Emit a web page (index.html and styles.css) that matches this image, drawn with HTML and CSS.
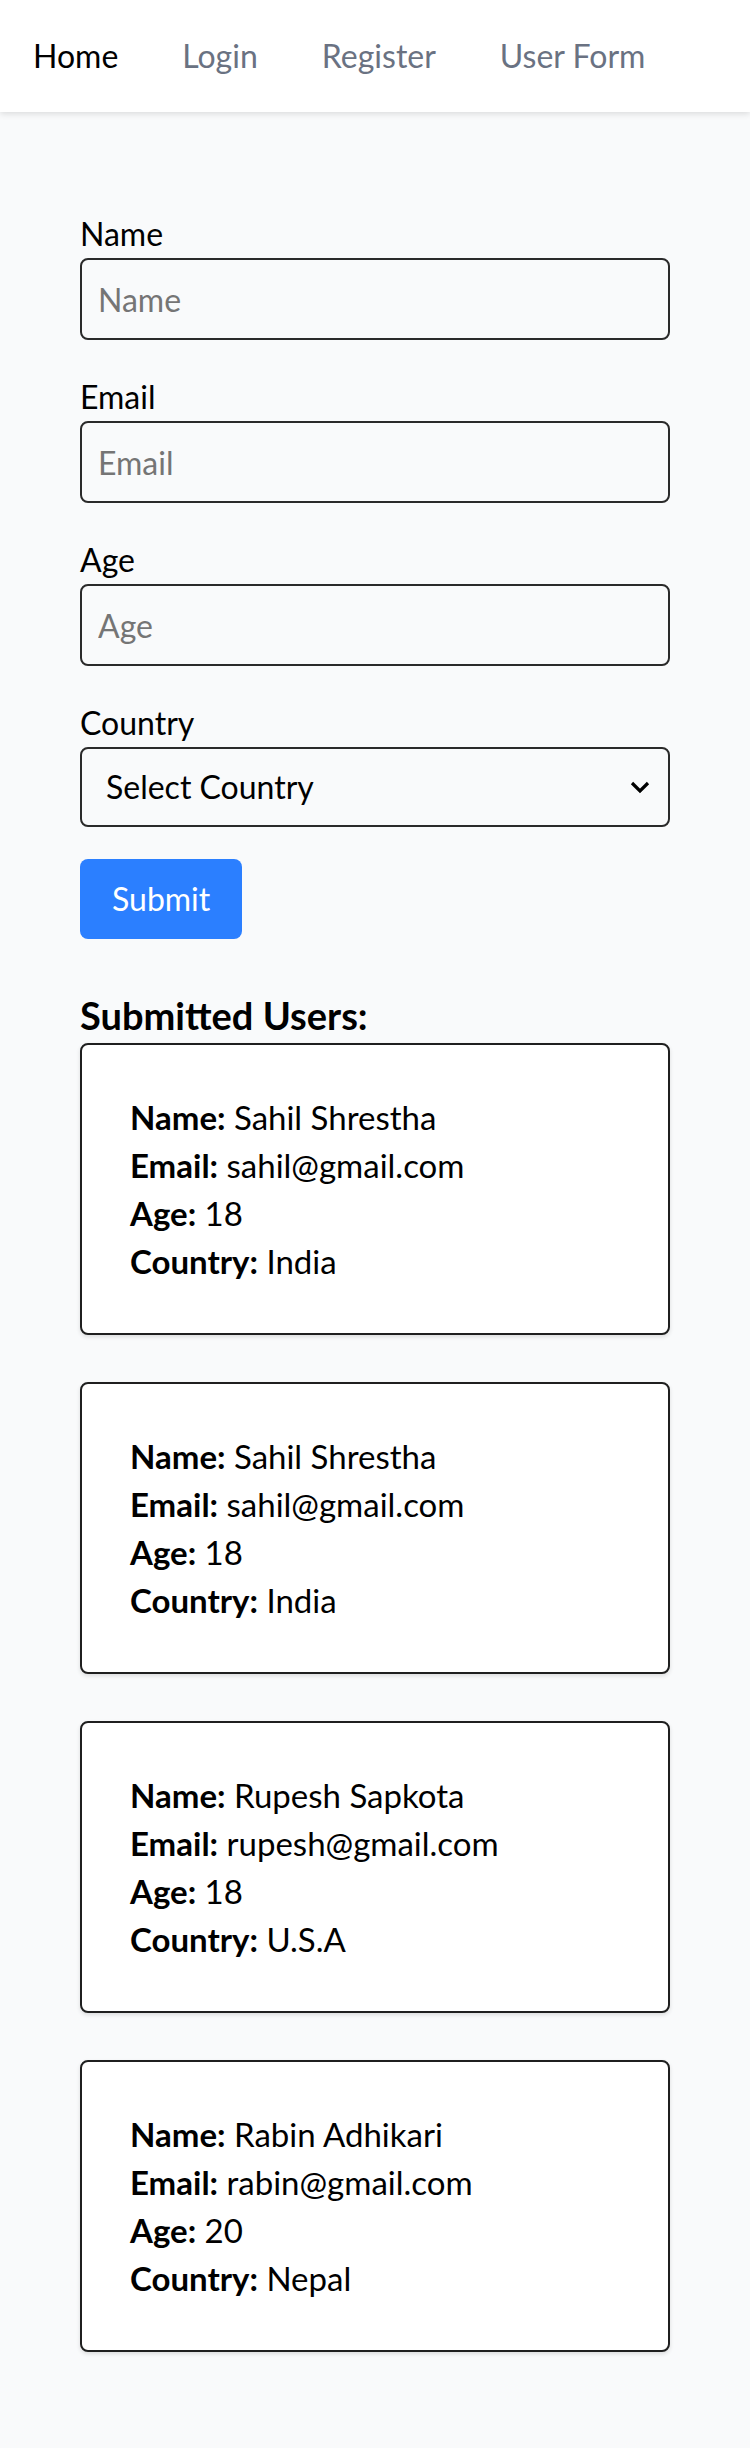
FILE: index.html
```html
<!DOCTYPE html>
<html lang="en">
<head>
<meta charset="utf-8">
<title>User Form</title>
<link rel="stylesheet" href="styles.css">
</head>
<body>
<nav class="nav">
  <a class="nav-link active" href="#">Home</a>
  <a class="nav-link" href="#">Login</a>
  <a class="nav-link" href="#">Register</a>
  <a class="nav-link" href="#">User Form</a>
</nav>
<main class="container">
  <form class="form">
    <div class="field">
      <label class="label" for="name">Name</label>
      <input class="input" id="name" type="text" placeholder="Name">
    </div>
    <div class="field">
      <label class="label" for="email">Email</label>
      <input class="input" id="email" type="email" placeholder="Email">
    </div>
    <div class="field">
      <label class="label" for="age">Age</label>
      <input class="input" id="age" type="number" placeholder="Age">
    </div>
    <div class="field">
      <label class="label" for="country">Country</label>
      <select class="select" id="country">
        <option>Select Country</option>
        <option>India</option>
        <option>Nepal</option>
        <option>U.S.A</option>
      </select>
    </div>
    <button class="btn" type="button">Submit</button>
  </form>
  <h2 class="users-title">Submitted Users:</h2>
  <div class="user-list">
    <div class="user-card">
      <p class="row"><strong>Name:</strong> Sahil Shrestha</p>
      <p class="row"><strong>Email:</strong> sahil@gmail.com</p>
      <p class="row"><strong>Age:</strong> 18</p>
      <p class="row"><strong>Country:</strong> India</p>
    </div>
    <div class="user-card">
      <p class="row"><strong>Name:</strong> Sahil Shrestha</p>
      <p class="row"><strong>Email:</strong> sahil@gmail.com</p>
      <p class="row"><strong>Age:</strong> 18</p>
      <p class="row"><strong>Country:</strong> India</p>
    </div>
    <div class="user-card">
      <p class="row"><strong>Name:</strong> Rupesh Sapkota</p>
      <p class="row"><strong>Email:</strong> rupesh@gmail.com</p>
      <p class="row"><strong>Age:</strong> 18</p>
      <p class="row"><strong>Country:</strong> U.S.A</p>
    </div>
    <div class="user-card">
      <p class="row"><strong>Name:</strong> Rabin Adhikari</p>
      <p class="row"><strong>Email:</strong> rabin@gmail.com</p>
      <p class="row"><strong>Age:</strong> 20</p>
      <p class="row"><strong>Country:</strong> Nepal</p>
    </div>
  </div>
</main>
</body>
</html>
```
FILE: styles.css
```css
* { box-sizing: border-box; }

body {
  margin: 0;
  background: #f9fafb;
  color: #000;
  font-family: "Lato", "Noto Sans", sans-serif;
  font-size: 32px;
  line-height: 48px;
}

.nav {
  display: flex;
  gap: 64px;
  padding: 32px 33px;
  background: #fff;
  box-shadow: 0 2px 6px rgba(0, 0, 0, 0.12);
}

.nav-link {
  color: #6a7282;
  text-decoration: none;
}

.nav-link.active { color: #000; }

.container {
  padding: 98px 80px 96px;
}

.form {
  display: flex;
  flex-direction: column;
}

.field {
  display: flex;
  flex-direction: column;
  margin-bottom: 33px;
}

.label {
  display: block;
  line-height: 48px;
}

.input {
  width: 100%;
  height: 82px;
  padding: 0 16px;
  border: 2px solid #2a2a2a;
  border-radius: 8px;
  background: transparent;
  font: inherit;
  color: #000;
}

.input::placeholder { color: #757575; }

.select {
  width: 100%;
  height: 80px;
  padding: 0 60px 0 24px;
  border: 2px solid #2a2a2a;
  border-radius: 8px;
  background: transparent url("data:image/svg+xml,%3Csvg xmlns='http://www.w3.org/2000/svg' width='20' height='14' viewBox='0 0 20 14'%3E%3Cpath d='M2 3l8 8 8-8' fill='none' stroke='%23000' stroke-width='3.2'/%3E%3C/svg%3E") no-repeat right 18px center;
  -webkit-appearance: none;
  appearance: none;
  font: inherit;
  color: #000;
}

.btn {
  align-self: flex-start;
  height: 80px;
  padding: 0 32px;
  border: none;
  border-radius: 8px;
  background: #2b7fff;
  color: #fff;
  font: inherit;
  margin-top: -1px;
}

.users-title {
  margin: 48px 0 0;
  font-size: 38px;
  line-height: 56px;
  font-weight: 700;
}

.user-list {
  display: flex;
  flex-direction: column;
  gap: 47px;
}

.user-card {
  background: #fff;
  border: 2px solid #1f1f1f;
  border-radius: 8px;
  padding: 48px;
  box-shadow: 0 2px 4px rgba(0, 0, 0, 0.12);
}

.row {
  margin: 0;
  font-size: 33px;
}

.row strong { font-weight: 700; }
```
